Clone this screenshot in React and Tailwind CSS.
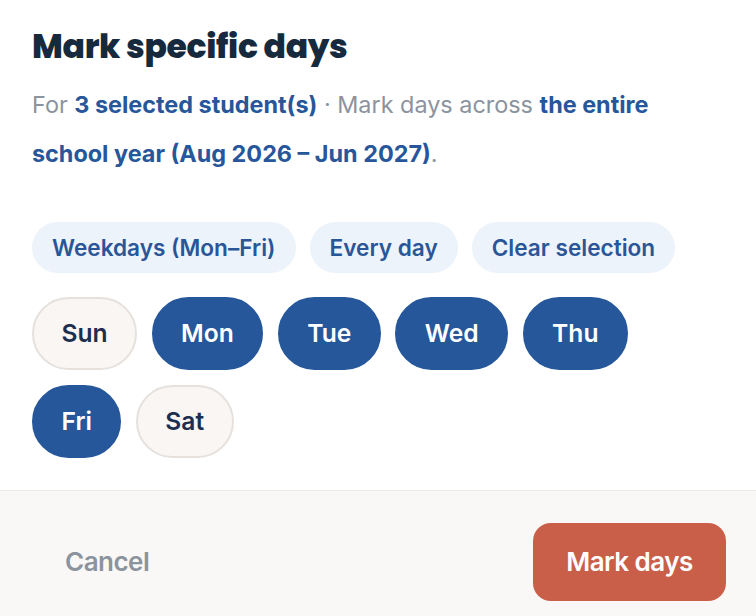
import React, { useState } from "react";

// Mark specific days dialog

const DAYS = ["Sun", "Mon", "Tue", "Wed", "Thu", "Fri", "Sat"];

export default function App() {
  const [picked, setPicked] = useState(["Mon", "Tue", "Wed", "Thu", "Fri"]);
  const toggle = d => setPicked(p => (p.includes(d) ? p.filter(x => x !== d) : [...p, d]));

  return (
    <div className="w-[756px] h-[616px] bg-white flex flex-col font-['Inter',sans-serif] overflow-hidden">
      <div className="flex-1 px-8 pt-[27px]">
        <h1 className="text-[33px] leading-[40px] font-extrabold text-[#172a3d] tracking-[-0.01em] font-['Poppins','Inter',sans-serif]">
          Mark specific days
        </h1>
        <p className="mt-[13px] text-[23.4px] leading-[49px] text-[#8b939e] w-[660px]">
          For <span className="font-bold text-[#27569a]">3 selected student(s)</span> · Mark days across{" "}
          <span className="font-bold text-[#27569a]">the entire school year (Aug 2026 – Jun 2027)</span>.
        </p>

        {/* quick picks ---------------------------------------------- */}
        <div className="mt-[44px] flex gap-[14px]">
          <button onClick={() => setPicked(["Mon", "Tue", "Wed", "Thu", "Fri"])}
            className="h-[51px] px-5 rounded-full bg-[#edf3fa] text-[22.6px] font-semibold text-[#2a5698]">Weekdays (Mon–Fri)</button>
          <button onClick={() => setPicked([...DAYS])}
            className="h-[51px] px-5 rounded-full bg-[#edf3fa] text-[22.6px] font-semibold text-[#2a5698]">Every day</button>
          <button onClick={() => setPicked([])}
            className="h-[51px] px-5 rounded-full bg-[#edf3fa] text-[22.6px] font-semibold text-[#2a5698]">Clear selection</button>
        </div>

        {/* day toggles ---------------------------------------------- */}
        <div className="mt-[24px] flex flex-wrap gap-x-[14.5px] gap-y-[15px] w-[620px]">
          {DAYS.map(d => {
            const on = picked.includes(d);
            return (
              <button key={d} onClick={() => toggle(d)}
                className={`h-[73px] px-[27.5px] rounded-full text-[24.6px] font-semibold border-2 ${on
                  ? "bg-[#26579a] border-[#26579a] text-white"
                  : "bg-[#f9f6f4] border-[#e6e1dd] text-[#1c2f4f]"}`}>{d}</button>
            );
          })}
        </div>
      </div>

      <div className="h-[126px] shrink-0 bg-[#f9f8f6] border-t border-[#eeeae6] flex items-center justify-between pt-[16px] pl-[65px] pr-[30px]">
        <button className="text-[26px] font-semibold text-[#8b939e] tracking-[-0.02em]">Cancel</button>
        <button className="h-[78px] w-[193px] rounded-[18px] bg-[#c95f48] text-white text-[26px] font-semibold tracking-[-0.02em]">Mark days</button>
      </div>
    </div>
  );
}
